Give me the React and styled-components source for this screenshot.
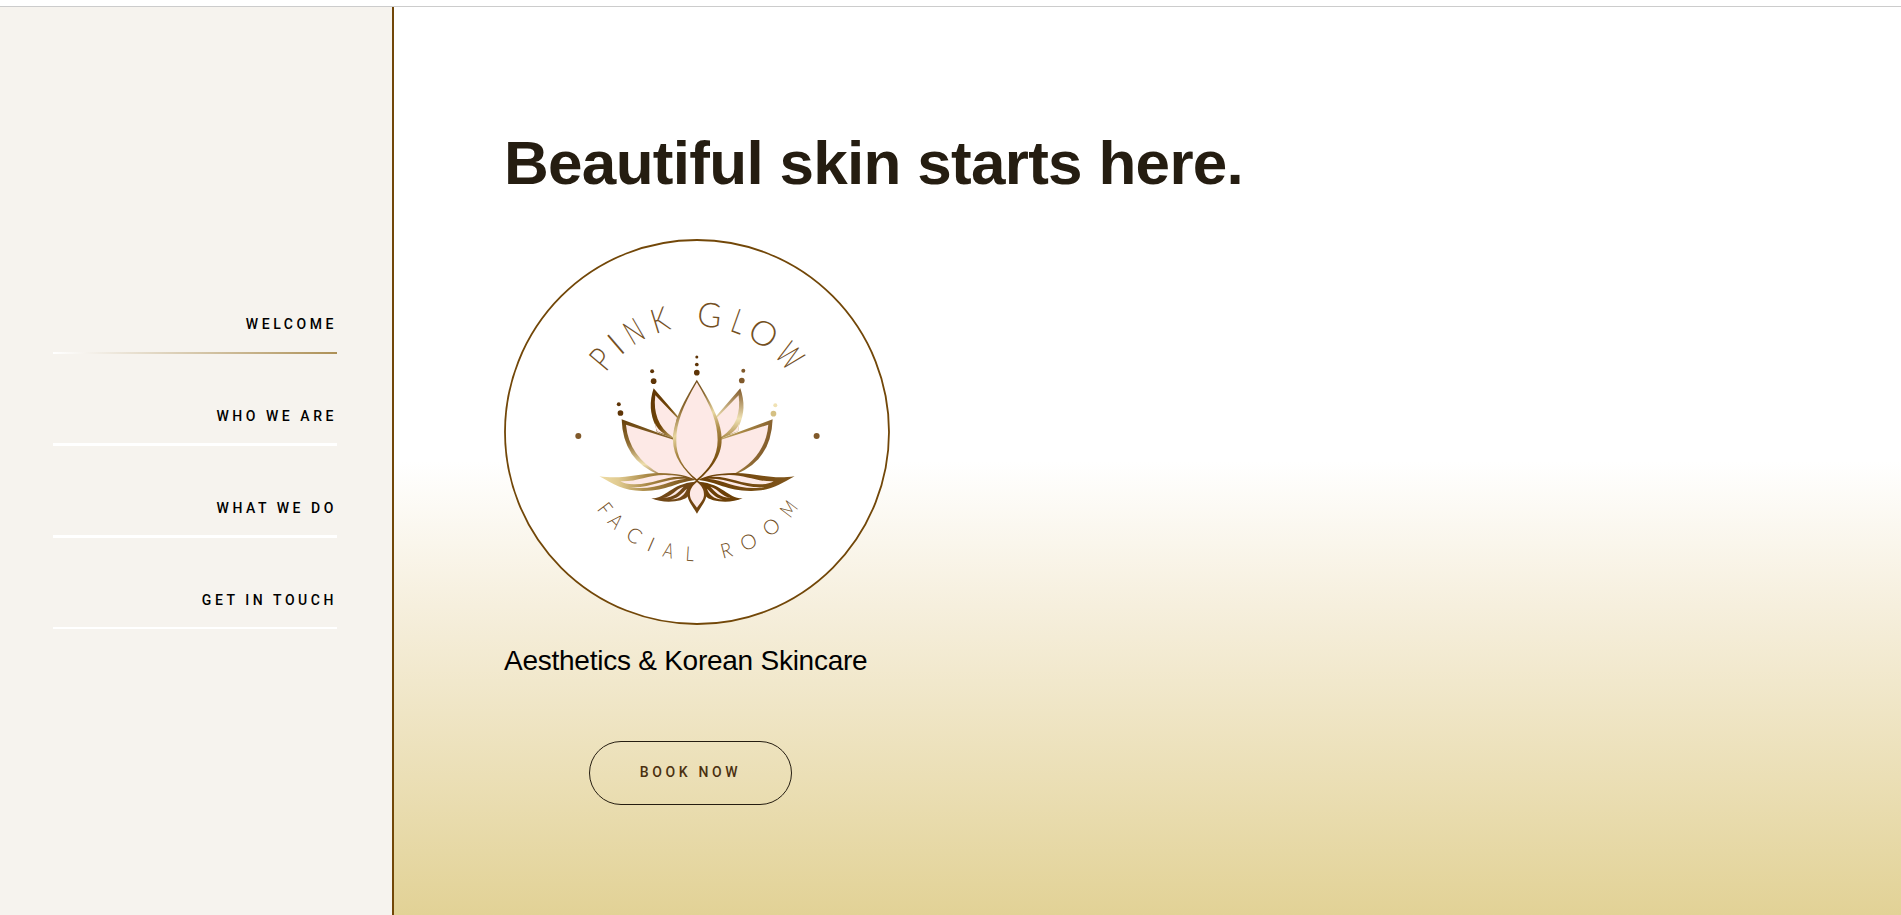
import React from 'react';
import styled, { createGlobalStyle } from 'styled-components';

const GlobalStyle = createGlobalStyle`
  * { box-sizing: border-box; }
  body { margin: 0; background: #fff; overflow: hidden; font-family: "Liberation Sans", Arial, sans-serif; }
  h1, p { margin: 0; }
`;

const Page = styled.div`
  height: 100vh;
  display: flex;
  flex-direction: column;
`;

const TopBar = styled.header`
  flex: none;
  height: 7px;
  background: #fff;
  border-bottom: 1px solid #ccc;
`;

const Body = styled.div`
  flex: 1;
  display: flex;
  min-height: 0;
`;

const Sidebar = styled.nav`
  width: 394px;
  flex: none;
  background: #f6f3ee;
  border-right: 2px solid #724708;
  padding: 299px 55px 0 53px;
`;

const NavItem = styled.a`
  display: block;
  height: 92px;
  padding-top: 9px;
  text-align: right;
  font: 500 14px/18px Roboto, sans-serif;
  letter-spacing: 3.55px;
  color: #000;
  text-decoration: none;
`;

const NavLine = styled.span`
  display: block;
  height: ${(p) => p.$thickness}px;
  margin-top: ${(p) => (p.$active ? 19 : 18)}px;
  background: ${(p) => (p.$active ? 'linear-gradient(90deg, #fff 0%, #f6f3ee 11%, #ad9056 100%)' : '#fff')};
`;

const Hero = styled.main`
  flex: 1;
  padding: 119px 110px 0;
  background: linear-gradient(180deg, #fff 0%, #fff 50%, #f6efdd 66%, #e2d296 100%);
`;

const Title = styled.h1`
  font-size: 62px;
  line-height: 74px;
  letter-spacing: -0.7px;
  font-weight: 700;
  color: #251d11;
`;

const Badge = styled.svg`
  display: block;
  margin-top: 39px;
`;

const Tagline = styled.p`
  margin-top: 19px;
  font-size: 28px;
  line-height: 34px;
  letter-spacing: -0.25px;
  color: #000;
`;

const BookButton = styled.button`
  display: block;
  margin: 63px 0 0 85px;
  padding: 0 0 2px;
  width: 203px;
  height: 64px;
  border: 1px solid #251d11;
  border-radius: 32px;
  background: transparent;
  color: #4a3010;
  font: 500 14px/18px Roboto, sans-serif;
  letter-spacing: 3.65px;
`;

const NAV = [
  ['WELCOME', 2],
  ['WHO WE ARE', 3],
  ['WHAT WE DO', 3],
  ['GET IN TOUCH', 2],
];

const TOP = [
  ['P', -50, 0.8], ['I', -40.5, 1], ['N', -30.3, 0.65], ['K', -17.2, 0.8], [' ', -6, 1],
  ['G', 5.7, 0.97], ['L', 19.5, 0.7], ['O', 32.1, 1.02], ['W', 48, 0.62],
];
const BOTTOM = [
  ['F', 52.5, 0.8], ['A', 44.4, 0.85], ['C', 32.9, 1], ['I', 23.4, 1], ['A', 14.2, 0.75], ['L', 3.5, 0.8],
  [' ', -5, 1], ['R', -14.7, 0.9], ['O', -26.5, 1], ['O', -40, 1], ['M', -52.5, 0.75],
];

const ArcLetters = ({ letters, radius, size, cy }) => (
  <g fontFamily="Lato, sans-serif" fontWeight="300" fontSize={size} fill="#74501f" textAnchor="middle">
    {letters.map(([c, a, s], i) => (
      <text key={i} xmlSpace="preserve" transform={`translate(193 ${cy}) rotate(${a}) translate(0 ${radius}) scale(${s} 1)`}>{c}</text>
    ))}
  </g>
);

const DOTS = [
  [349.5, 51, 4.5, '#5e3406'], [349.5, 73.5, 5.5, '#5e3406'], [349.5, 98, 8.5, '#5e3406'],
  [215.5, 94, 6, '#5e3406'], [220, 123.5, 8.5, '#5e3406'], [115.5, 193, 6, '#5e3406'], [120.5, 219, 8.5, '#5e3406'],
  [489, 92.5, 6, '#80592a'], [484.5, 121.5, 8.5, '#80592a'], [585, 195.5, 6, '#f0e2b4'], [579.5, 221, 8.5, '#d5c083'],
  [-6, 288, 9, '#80592a'], [709, 288, 9, '#80592a'],
];

const PINK = '#fde9e6';

const Leaf = ({ fill }) => (
  <g>
    <path d="M57 409 C130 420 180 398 240 399 C290 400 325 408 346 420 C290 426 260 452 190 453 C130 454 100 432 57 409Z" fill={fill} />
    <path d="M120 424 C170 426 205 404 255 405 C285 406 300 408 312 411 C255 406 220 434 160 433 C142 433 130 430 120 424Z" fill={PINK} />
    <path d="M148 441 C210 446 250 414 318 416 C270 420 240 444 180 444 C168 444 158 443 148 441Z" fill={PINK} />
    <path d="M213 475 C262 474 268 432 345 425 C332 440 330 452 324 468 C310 486 250 492 213 475Z" fill={fill === 'url(#goldLeafL)' ? '#714817' : '#6b3f06'} />
    <path d="M248 474 C278 470 282 448 310 440 C294 456 284 472 248 474Z" fill={PINK} />
    <path d="M272 478 C296 474 306 458 320 446 C314 462 302 478 272 478Z" fill={PINK} />
  </g>
);

const Lotus = () => (
  <g transform="translate(76.300 101) scale(.33333)">
    {DOTS.map(([x, y, r, c]) => <circle key={x + '-' + y} cx={x} cy={y} r={r} fill={c} />)}
    <path d="M220 145 L294 230 L280 297 Q240 280 228 274 L226 258 Q200 205 220 145Z" fill="url(#goldBackL)" />
    <path d="M225 166 L290 233 L278 292 Q244 268 232 236 Q220 205 225 166Z" fill={PINK} />
    <path d="M224 250 Q232 270 254 283 L229 274Z" fill={PINK} />
    <path d="M480 145 L406 230 L420 297 Q460 280 474 274 L476 258 Q501 205 480 145Z" fill="url(#goldBackR)" />
    <path d="M475 166 L410 233 L422 292 Q456 268 469 236 Q480 205 475 166Z" fill={PINK} />
    <path d="M477 250 Q470 270 448 283 L473 274Z" fill={PINK} />
    <path d="M124 238 L282 296 L346 418 L236 404 Q128 362 124 238Z" fill="url(#goldSideL)" />
    <path d="M137 254 L280 299 L346 418 L240 402 Q146 350 137 254Z" fill={PINK} />
    <path d="M577 238 L420 296 L354 418 L464 404 Q573 362 577 238Z" fill="url(#goldSideR)" />
    <path d="M564 254 L422 299 L354 418 L462 401 Q556 350 564 254Z" fill={PINK} />
    <path d="M349.500 119 C300 200 278 250 278 300 C278 350 310 390 349.500 425 C390 390 424 350 424 300 C424 250 400 200 349.500 119Z" fill="url(#goldMid)" />
    <path d="M349.500 127 C307 200 288 250 288 300 C286 350 312 388 349.500 418 C386 388 412 350 412 300 C412 250 393 200 349.500 127Z" fill={PINK} />
    <Leaf fill="url(#goldLeafL)" />
    <g transform="translate(700 0) scale(-1 1)"><Leaf fill="url(#goldLeafR)" /></g>
    <path d="M350 421 C330 432 321 446 322 468 C323 482 338 501 350 521 C362 501 377 482 378 468 C379 446 370 432 350 421Z" fill="#714510" />
    <path d="M350 426 C335 438 328 450 329 466 C330 480 342 492 350 503 C358 492 370 480 371 466 C372 450 365 438 350 426Z" fill={PINK} />
  </g>
);

const Gradients = () => (
  <defs>
    <linearGradient id="goldMid" x1="0" y1="0" x2=".3" y2="1"><stop offset="0" stopColor="#5e3406" /><stop offset=".3" stopColor="#8a682f" /><stop offset=".52" stopColor="#e8d6a0" /><stop offset=".7" stopColor="#a98845" /><stop offset="1" stopColor="#724708" /></linearGradient>
    <linearGradient id="goldBackL" x1="0" y1="0" x2="1" y2="1"><stop offset="0" stopColor="#5e3406" /><stop offset=".55" stopColor="#724708" /><stop offset="1" stopColor="#d5c083" /></linearGradient>
    <linearGradient id="goldBackR" x1="0" y1="0" x2="0" y2="1"><stop offset="0" stopColor="#80592a" /><stop offset=".6" stopColor="#f0e2b4" /><stop offset="1" stopColor="#a98845" /></linearGradient>
    <linearGradient id="goldSideL" x1="0" y1="0" x2="0" y2="1"><stop offset="0" stopColor="#66400a" /><stop offset=".4" stopColor="#8f6d33" /><stop offset=".75" stopColor="#efdfae" /><stop offset="1" stopColor="#80592a" /></linearGradient>
    <linearGradient id="goldSideR" x1="0" y1="0" x2="1" y2=".3"><stop offset="0" stopColor="#e8d79e" /><stop offset=".6" stopColor="#a98845" /><stop offset="1" stopColor="#80592a" /></linearGradient>
    <linearGradient id="goldLeafL"><stop offset="0" stopColor="#efdda6" /><stop offset=".2" stopColor="#e0ca90" /><stop offset=".5" stopColor="#a98845" /><stop offset="1" stopColor="#724a14" /></linearGradient>
    <linearGradient id="goldLeafR"><stop offset="0" stopColor="#80561c" /><stop offset="1" stopColor="#6b3f06" /></linearGradient>
  </defs>
);

export default function App() {
  return (
    <Page>
      <GlobalStyle />
      <TopBar />
      <Body>
        <Sidebar>
          {NAV.map(([label, thickness], i) => (
            <NavItem key={label} href="#">{label}<NavLine $active={i === 0} $thickness={thickness} /></NavItem>
          ))}
        </Sidebar>
        <Hero>
          <Title>Beautiful skin starts here.</Title>
          <Badge width="386" height="386" viewBox="0 0 386 386">
            <Gradients />
            <circle cx="193" cy="193" r="192" fill="#fff" stroke="#724708" strokeWidth="1.8" />
            <ArcLetters letters={TOP} radius={-113} size={34} cy={200.3} />
            <Lotus />
            <ArcLetters letters={BOTTOM} radius={123} size={20.5} cy={199.3} />
          </Badge>
          <Tagline>Aesthetics &amp; Korean Skincare</Tagline>
          <BookButton>BOOK NOW</BookButton>
        </Hero>
      </Body>
    </Page>
  );
}
